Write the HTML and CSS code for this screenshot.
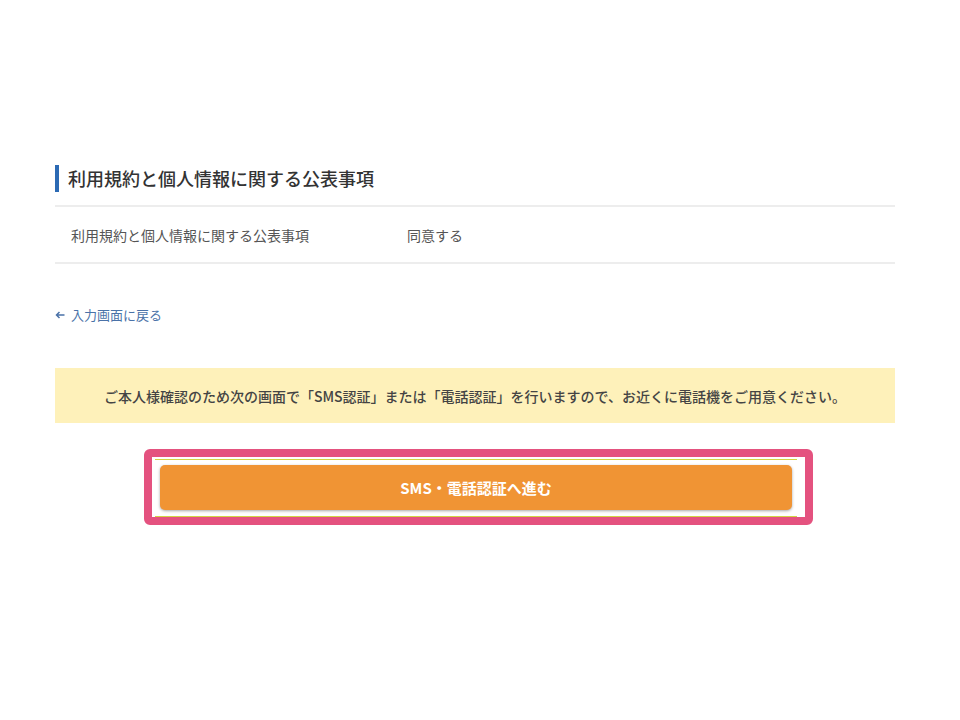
FILE: index.html
```html
<!DOCTYPE html>
<html lang="ja">
<head>
  <meta charset="UTF-8">
  <title>確認画面</title>
  <meta name="viewport" content="width=device-width, initial-scale=1">
  <link rel="stylesheet" href="styles.css">
</head>
<body>
  <main class="page">
    <section class="terms">
      <h2 class="section-title">利用規約と個人情報に関する公表事項</h2>
      <dl class="terms-row">
        <dt>利用規約と個人情報に関する公表事項</dt>
        <dd>同意する</dd>
      </dl>
    </section>

    <a class="back-link" href="#">
      <svg class="back-icon" width="10" height="8" viewBox="0 0 10 8" aria-hidden="true">
        <path d="M9.5 4H1.5M4.5 1L1.5 4L4.5 7" fill="none" stroke="currentColor" stroke-width="1.5"/>
      </svg>
      入力画面に戻る
    </a>

    <p class="notice">ご本人様確認のため次の画面で「SMS認証」または「電話認証」を行いますので、お近くに電話機をご用意ください。</p>

    <div class="submit-frame">
      <div class="submit-inner">
        <button type="button" class="submit-btn">SMS・電話認証へ進む</button>
      </div>
    </div>
  </main>
</body>
</html>
```

FILE: styles.css
```css
body {
  margin: 0;
  background: #fff;
  font-family: "Noto Sans CJK JP", "Noto Sans", sans-serif;
  color: #333;
}

/*===============================
Page
=============*/

.page {
  width: 840px;
  margin-left: 55px;
  padding-top: 165px;
}

.section-title {
  margin: 0 0 13px;
  padding-left: 9px;
  border-left: 4px solid #2c6ab4;
  font-size: 18px;
  font-weight: 500;
  line-height: 27px;
  color: #333;
}

.terms-row {
  display: flex;
  align-items: center;
  height: 55px;
  margin: 0;
  border-top: 2px solid #ededed;
  border-bottom: 2px solid #ededed;
  font-size: 14px;
  color: #555;
}

.terms-row dt {
  width: 336px;
  padding-left: 16px;
}

.terms-row dd {
  margin: 0;
}

.back-link {
  display: flex;
  align-items: center;
  gap: 6px;
  margin-top: 41px;
  line-height: 20px;
  font-size: 13px;
  color: #4a72a8;
  text-decoration: none;
}

.notice {
  margin: 43px 0 0;
  height: 55px;
  display: flex;
  align-items: center;
  justify-content: center;
  background: #fef1ba;
  font-size: 14px;
  font-weight: 500;
  color: #444;
}

/*===============================
Submit button
=============*/

.submit-frame {
  box-sizing: border-box;
  width: 669px;
  margin: 26px 0 0 89px;
  padding: 2px 8px 0 3px;
  border: 8px solid #e4527f;
  border-radius: 6px;
}

.submit-inner {
  padding: 5px 5px 6px;
  border-top: 1px solid #d2d444;
  border-bottom: 1px solid #d2d444;
}

.submit-btn {
  display: block;
  width: 100%;
  height: 45px;
  border: none;
  border-radius: 5px;
  background: #f09434;
  box-shadow: 0 1px 3px rgba(0, 0, 0, 0.35);
  font-family: inherit;
  font-size: 15px;
  font-weight: bold;
  color: #fff;
  cursor: pointer;
}
```
